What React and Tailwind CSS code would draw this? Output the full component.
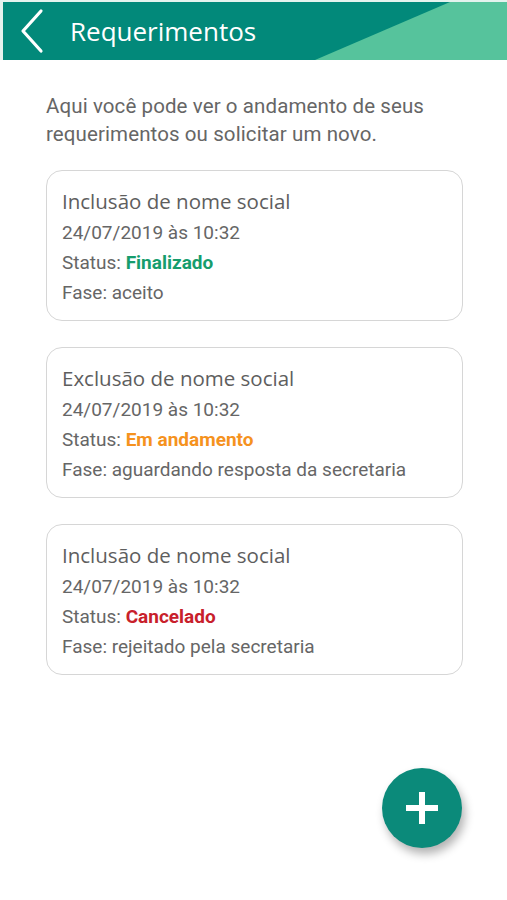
import React from "react";

const requests = [
  {
    id: 1,
    title: "Inclusão de nome social",
    date: "24/07/2019 às 10:32",
    status: "Finalizado",
    statusClass: "text-[#169d6d]",
    phase: "aceito",
  },
  {
    id: 2,
    title: "Exclusão de nome social",
    date: "24/07/2019 às 10:32",
    status: "Em andamento",
    statusClass: "text-[#f5921e]",
    phase: "aguardando resposta da secretaria",
  },
  {
    id: 3,
    title: "Inclusão de nome social",
    date: "24/07/2019 às 10:32",
    status: "Cancelado",
    statusClass: "text-[#c8202b]",
    phase: "rejeitado pela secretaria",
  },
];

const Header = () => (
  <div className="pt-[2px] pl-[3px] bg-[#e4f3ee]">
    <div className="relative h-[58px] bg-[#02897a] flex items-center overflow-hidden">
      <svg
        className="absolute inset-0 w-full h-full"
        viewBox="0 0 504 58"
        preserveAspectRatio="none"
      >
        <polygon points="447,0 504,0 504,58 312,58" fill="#56c39c" />
      </svg>
      <svg className="relative ml-[16px]" width="26" height="46" viewBox="0 0 26 46">
        <polyline
          points="22,3 4,23 22,43"
          fill="none"
          stroke="#fff"
          strokeWidth="3.2"
          strokeLinecap="round"
          strokeLinejoin="round"
        />
      </svg>
      <h1 className="relative ml-[25px] text-white text-[26px] font-['Open_Sans',sans-serif] leading-none -mt-[1px]">
        Requerimentos
      </h1>
    </div>
  </div>
);

const RequestCard = ({ item }) => (
  <div className="border border-[#d6d6d6] rounded-[16px] pt-[13px] pb-[12px] pl-[15px] pr-3 bg-white">
    <h2 className="text-[20.5px] leading-[34px] text-[#5e5e5e] font-['Open_Sans',sans-serif]">
      {item.title}
    </h2>
    <div className="font-['Roboto',sans-serif] text-[19px] text-[#666] leading-[30px]">
      <p>{item.date}</p>
      <p>
        Status: <span className={`font-bold ${item.statusClass}`}>{item.status}</span>
      </p>
      <p>Fase: {item.phase}</p>
    </div>
  </div>
);

export default function App() {
  return (
    <div className="relative w-[507px] h-[900px] bg-white overflow-hidden">
      <Header />
      <div className="pl-[46px] pr-[44px] pt-[32px]">
        <p className="font-['Roboto',sans-serif] text-[20.5px] leading-[28px] text-[#666] tracking-[0.1px]">
          Aqui você pode ver o andamento de seus requerimentos ou solicitar um novo.
        </p>
        <div className="mt-[22px] flex flex-col gap-[26px]">
          {requests.map((item) => (
            <RequestCard key={item.id} item={item} />
          ))}
        </div>
      </div>
      <button className="absolute left-[382px] top-[768px] w-[80px] h-[80px] rounded-full bg-[#0b8a7a] flex items-center justify-center shadow-[3px_6px_10px_rgba(0,0,0,0.3)]">
        <svg width="34" height="34" viewBox="0 0 34 34">
          <rect x="14" y="1" width="6" height="32" fill="#fff" />
          <rect x="1" y="14" width="32" height="6" fill="#fff" />
        </svg>
      </button>
    </div>
  );
}
